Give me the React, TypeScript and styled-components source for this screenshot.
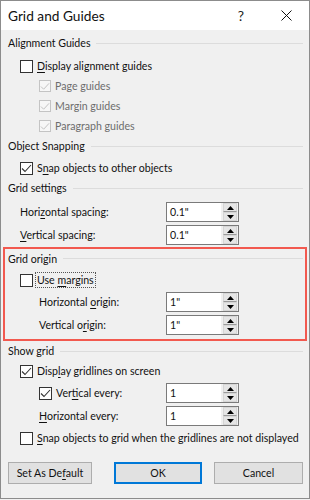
import React from 'react'
import styled, { createGlobalStyle } from 'styled-components'

const Global = createGlobalStyle`
  html, body { margin: 0; padding: 0; background: #f0f0f0; }
  body { font-family: 'Segoe UI', Lato, 'Noto Sans', sans-serif; font-size: 10.6px; color: #111; }
`

const Dialog = styled.div`
  width: 310px;
  height: 499px;
  box-sizing: border-box;
  border: 1px solid #8c8c8c;
  background: #f0f0f0;
  display: flex;
  flex-direction: column;
`

const TitleBar = styled.div`
  height: 29px;
  background: #fff;
  display: flex;
  align-items: center;
  padding-left: 7px;
`

const Title = styled.div`
  flex: 1;
  font-size: 13.7px;
`

const Help = styled.div`
  width: 44px;
  font-size: 14px;
  text-align: center;
  color: #222;
`

const Close = styled.div`
  width: 46px;
  display: flex;
  justify-content: center;
  align-items: center;
`

const Body = styled.div`
  padding: 3px 6px 0 7px;
  display: flex;
  flex-direction: column;
`

const Header = styled.div<{ $h?: number }>`
  height: ${p => p.$h ?? 20}px;
  display: flex;
  align-items: center;
  gap: 6px;
  &::after {
    content: '';
    flex: 1;
    height: 1px;
    background: #dcdcdc;
  }
`

const Row = styled.div<{ $indent: number; $gap?: number }>`
  height: 20px;
  display: flex;
  align-items: center;
  padding-left: ${p => p.$indent}px;
  margin-top: ${p => p.$gap ?? 0}px;
`

const Box = styled.span<{ $disabled?: boolean; $size?: number }>`
  width: ${p => p.$size ?? 13}px;
  height: ${p => p.$size ?? 13}px;
  box-sizing: border-box;
  border: 1px solid ${p => (p.$disabled ? '#c4c4c4' : '#333')};
  background: ${p => (p.$disabled ? '#f7f7f7' : '#fff')};
  display: flex;
  align-items: center;
  justify-content: center;
  margin-right: 4px;
  flex-shrink: 0;
`

const Label = styled.span<{ $disabled?: boolean; $focus?: boolean }>`
  color: ${p => (p.$disabled ? '#6d6d6d' : '#111')};
  white-space: nowrap;
  padding: 0 1px;
  border: 1px dotted ${p => (p.$focus ? '#555' : 'transparent')};
  margin-left: -2px;
  line-height: 14px;
`

const Key = styled.u`
  text-underline-offset: 2px;
`

const FieldRow = styled.div<{ $indent: number; $gap?: number }>`
  height: 20px;
  display: grid;
  grid-template-columns: ${p => 158 - p.$indent}px 73px;
  align-items: center;
  padding-left: ${p => p.$indent}px;
  margin-top: ${p => p.$gap ?? 0}px;
`

const Spin = styled.div`
  height: 20px;
  box-sizing: border-box;
  border: 1px solid #7a7a7a;
  background: #fff;
  display: flex;
`

const SpinText = styled.div`
  flex: 1;
  padding-left: 3px;
  line-height: 18px;
`

const SpinButtons = styled.div`
  width: 16px;
  display: flex;
  flex-direction: column;
  background: #f0f0f0;
  border-left: 1px solid #f0f0f0;
`

const SpinBtn = styled.div`
  flex: 1;
  display: flex;
  align-items: center;
  justify-content: center;
  background: #e5e5e5;
  border: 1px solid #d6d6d6;
  margin: 0 1px;
  &:first-child { border-bottom-color: #9a9a9a; }
`

const Highlight = styled.div`
  margin: 2px -4px 0 -5px;
  padding: 0 2px 0 3px;
  border: 2px solid #f2594f;
  display: flex;
  flex-direction: column;
  height: 94px;
  box-sizing: border-box;
`

const Footer = styled.div`
  display: flex;
  margin-top: 14px;
  padding-left: 7px;
`

const Button = styled.div<{ $w: number; $gap?: number; $primary?: boolean }>`
  width: ${p => p.$w}px;
  height: 22px;
  box-sizing: border-box;
  margin-left: ${p => p.$gap ?? 0}px;
  background: #e1e1e1;
  border: ${p => (p.$primary ? '2px solid #0078d7' : '1px solid #adadad')};
  display: flex;
  align-items: center;
  justify-content: center;
`

const Check = ({ light }: { light?: boolean }) => (
  <svg width="11" height="9" viewBox="0 0 11 9">
    <polyline points="1,4.5 4,7.5 10,1" fill="none" stroke={light ? '#c2c2c2' : '#333'} strokeWidth="1.1" />
  </svg>
)

const Arrow = ({ up }: { up?: boolean }) => (
  <svg width="7" height="4" viewBox="0 0 7 4">
    <polygon points={up ? '3.5,0 7,4 0,4' : '0,0 7,0 3.5,4'} fill="#000" />
  </svg>
)

const Spinner = ({ value }: { value: string }) => (
  <Spin>
    <SpinText>{value}</SpinText>
    <SpinButtons>
      <SpinBtn><Arrow up /></SpinBtn>
      <SpinBtn><Arrow /></SpinBtn>
    </SpinButtons>
  </Spin>
)

const CheckRow = ({
  indent,
  gap,
  checked,
  disabled,
  focus,
  small,
  children,
}: {
  indent: number
  gap?: number
  checked?: boolean
  disabled?: boolean
  focus?: boolean
  small?: boolean
  children: React.ReactNode
}) => (
  <Row $indent={indent} $gap={gap}>
    <Box $disabled={disabled} $size={small ? 12 : 13}>{checked && <Check light={disabled} />}</Box>
    <Label $disabled={disabled} $focus={focus}>{children}</Label>
  </Row>
)

export default function App() {
  return (
    <>
      <Global />
      <Dialog>
        <TitleBar>
          <Title>Grid and Guides</Title>
          <Help>?</Help>
          <Close>
            <svg width="11" height="11" viewBox="0 0 11 11">
              <path d="M0.5 0.5 L10.5 10.5 M10.5 0.5 L0.5 10.5" stroke="#111" strokeWidth="1" />
            </svg>
          </Close>
        </TitleBar>
        <Body>
          <Header>Alignment Guides</Header>
          <CheckRow indent={12} gap={3}><Key>D</Key>isplay alignment guides</CheckRow>
          <CheckRow indent={31} checked disabled small>Page guides</CheckRow>
          <CheckRow indent={31} checked disabled small>Margin guides</CheckRow>
          <CheckRow indent={31} checked disabled small>Paragraph guides</CheckRow>

          <Header>Object Snapping</Header>
          <CheckRow indent={12} gap={2} checked>S<Key>n</Key>ap objects to other objects</CheckRow>

          <Header>Grid settings</Header>
          <FieldRow $indent={12} $gap={4}>
            <span>Hori<Key>z</Key>ontal spacing:</span>
            <Spinner value={'0.1"'} />
          </FieldRow>
          <FieldRow $indent={12} $gap={3}>
            <span><Key>V</Key>ertical spacing:</span>
            <Spinner value={'0.1"'} />
          </FieldRow>

          <Highlight>
            <Header $h={19}>Grid origin</Header>
            <CheckRow indent={12} gap={2} focus>Use <Key>m</Key>argins</CheckRow>
            <FieldRow $indent={31} $gap={2}>
              <span>Horizontal <Key>o</Key>rigin:</span>
              <Spinner value={'1"'} />
            </FieldRow>
            <FieldRow $indent={31} $gap={3}>
              <span>Vertical o<Key>r</Key>igin:</span>
              <Spinner value={'1"'} />
            </FieldRow>
          </Highlight>

          <Header>Show grid</Header>
          <CheckRow indent={12} checked>Disp<Key>l</Key>ay gridlines on screen</CheckRow>
          <FieldRow $indent={31} $gap={2}>
            <Row $indent={0}>
              <Box $size={13}><Check /></Box>
              <Label>Ver<Key>t</Key>ical every:</Label>
            </Row>
            <Spinner value="1" />
          </FieldRow>
          <FieldRow $indent={31} $gap={3}>
            <span><Key>H</Key>orizontal every:</span>
            <Spinner value="1" />
          </FieldRow>
          <CheckRow indent={12} gap={2}><Key>S</Key>nap objects to grid when the gridlines are not displayed</CheckRow>
        </Body>
        <Footer>
          <Button $w={84}>Set As De<Key>f</Key>ault</Button>
          <Button $w={88} $gap={22} $primary>OK</Button>
          <Button $w={89} $gap={12}>Cancel</Button>
        </Footer>
      </Dialog>
    </>
  )
}
